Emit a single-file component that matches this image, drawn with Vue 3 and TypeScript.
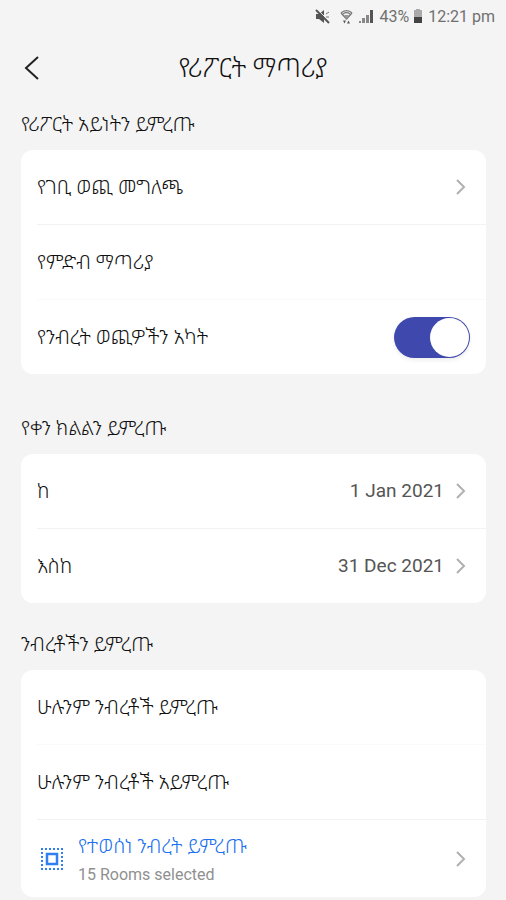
<script setup lang="ts">
import { ref } from 'vue'

const includeExpenses = ref<boolean>(true)
const chevron = 'M2 2 L9 9 L2 16'
</script>

<template>
  <div class="screen">
    <div class="status">
      <svg class="mute" width="15" height="15" viewBox="0 0 15 15" aria-hidden="true">
        <path d="M1 5h3l5-4v13l-5-4H1z" fill="#555" />
        <path d="M11 5l3-2M11 8h3" stroke="#777" />
        <path d="M2 0l13 13" stroke="#f4f4f4" stroke-width="1" />
        <path d="M1 1l13 13" stroke="#555" stroke-width="2" />
      </svg>
      <svg class="wifi" width="13" height="15" viewBox="0 0 13 15" aria-hidden="true">
        <path d="M1 4C4 .7 9 .7 12 4M3 5c2-1.500 5-1.500 7 0M1 4l5.500 6L12 4" fill="none" stroke="#777" stroke-width="1.200" />
        <path d="M4 6h5l-2.500 4z" fill="#999" />
        <path d="M3 11.500h3L4.500 14.500zM7 14.500h3l-1.500-3z" fill="#555" />
      </svg>
      <svg class="signal" width="16" height="15" viewBox="0 0 16 15" aria-hidden="true">
        <path d="M1 14v-2h2v2zM4 14V9h3v5zM8 14V6h3v8z" fill="#888" />
        <path d="M12 14V1h3v13z" fill="#555" />
      </svg>
      <span>43%</span>
      <svg class="battery" width="10" height="15" viewBox="0 0 10 15" aria-hidden="true">
        <path d="M3 0h4v1h2v7H1V1h2z" fill="#aaa" />
        <path d="M1 8h8v6H1z" fill="#444" />
      </svg>
      <span>12:21 pm</span>
    </div>

    <header class="header">
      <button class="back" type="button" aria-label="ተመለስ">
        <svg width="16" height="26" viewBox="0 0 16 26" aria-hidden="true">
          <path d="M14 2L2 13l12 11" fill="none" stroke="#222" stroke-width="2" />
        </svg>
      </button>
      <h1>የሪፖርት ማጣሪያ</h1>
    </header>

    <main>
      <section>
        <h2>የሪፖርት አይነትን ይምረጡ</h2>
        <div class="card">
          <button class="row" type="button">
            <span class="text">የገቢ ወጪ መግለጫ</span>
            <svg class="chevron" width="12" height="18" viewBox="0 0 12 18" aria-hidden="true"><path :d="chevron" /></svg>
          </button>
          <button class="row" type="button">
            <span class="text">የምድብ ማጣሪያ</span>
          </button>
          <label class="row faint">
            <span class="text">የንብረት ወጪዎችን አካት</span>
            <input v-model="includeExpenses" class="switch" type="checkbox" role="switch" />
          </label>
        </div>
      </section>

      <section>
        <h2>የቀን ክልልን ይምረጡ</h2>
        <div class="card">
          <button class="row" type="button">
            <span class="text">ከ</span>
            <span class="value">1 Jan 2021</span>
            <svg class="chevron" width="12" height="18" viewBox="0 0 12 18" aria-hidden="true"><path :d="chevron" /></svg>
          </button>
          <button class="row" type="button">
            <span class="text">እስከ</span>
            <span class="value">31 Dec 2021</span>
            <svg class="chevron" width="12" height="18" viewBox="0 0 12 18" aria-hidden="true"><path :d="chevron" /></svg>
          </button>
        </div>
      </section>

      <section>
        <h2>ንብረቶችን ይምረጡ</h2>
        <div class="card">
          <button class="row" type="button">
            <span class="text">ሁሉንም ንብረቶች ይምረጡ</span>
          </button>
          <button class="row faint" type="button">
            <span class="text">ሁሉንም ንብረቶች አይምረጡ</span>
          </button>
          <button class="row" type="button">
            <svg class="select-icon" width="24" height="24" viewBox="0 0 24 24" aria-hidden="true">
              <path
                d="M1 2h22M1 22h22M2 5v16M22 5v16"
                fill="none"
                stroke="#2f7ff0"
                stroke-width="2"
                stroke-dasharray="2 2"
              />
              <rect x="7" y="7" width="10" height="10" fill="none" stroke="#2f7ff0" stroke-width="2.500" />
            </svg>
            <span class="stack">
              <span class="text accent">የተወሰነ ንብረት ይምረጡ</span>
              <span class="caption">15 Rooms selected</span>
            </span>
            <svg class="chevron" width="12" height="18" viewBox="0 0 12 18" aria-hidden="true"><path :d="chevron" /></svg>
          </button>
        </div>
      </section>
    </main>
  </div>
</template>

<style>
body {
  background: #f4f4f4;
}
</style>

<style scoped>
.screen {
  font-family: Roboto, "Noto Sans", "Noto Sans Ethiopic", sans-serif;
  font-weight: 300;
  color: #111;
}

.status {
  display: flex;
  align-items: center;
  justify-content: flex-end;
  height: 32px;
  padding-right: 11px;
  font-size: 16px;
  font-weight: 400;
  color: #707070;
}

.mute {
  margin-right: 10px;
}

.wifi,
.signal,
.battery {
  margin-right: 5px;
}

.battery {
  margin-left: 4px;
}

.header {
  display: grid;
  grid-template-columns: 64px 1fr 64px;
  align-items: center;
  height: 72px;
}

.back {
  display: flex;
  padding: 8px 24px;
  border: 0;
  background: none;
}

h1 {
  margin: 0;
  font-size: 26px;
  font-weight: 300;
  line-height: 32px;
  text-align: center;
}

main {
  display: flex;
  flex-direction: column;
  gap: 29px;
  padding: 8px 20px 3px 21px;
}

section:first-child {
  padding-bottom: 13px;
}

h2 {
  height: 24px;
  margin: 0 0 14px;
  font-size: 20px;
  font-weight: 300;
  line-height: 24px;
}

.card {
  border-radius: 12px;
  background: #fff;
  overflow: hidden;
}

.row {
  display: flex;
  align-items: center;
  box-sizing: border-box;
  width: calc(100% - 16px);
  min-height: 75px;
  margin-left: 16px;
  padding: 0 16px 0 0;
  border: 0;
  border-top: 1px solid #f2f2f2;
  background: none;
  font: inherit;
  color: inherit;
  text-align: left;
}

.row.faint {
  border-top-color: #fafafa;
}

.row:first-child {
  min-height: 74px;
  border-top: 0;
}

.text {
  flex: 1;
  font-size: 20px;
  line-height: 24px;
}

.value {
  margin-right: 11px;
  font-size: 19px;
  font-weight: 400;
  line-height: 24px;
  color: #555;
}

.chevron {
  margin-right: 3px;
  fill: none;
  stroke: #b0b0b0;
  stroke-width: 2;
}

.switch {
  appearance: none;
  display: flex;
  width: 76px;
  height: 41px;
  margin: 0;
  padding: 1px;
  box-sizing: border-box;
  border-radius: 21px;
  background: #bbb;
  box-shadow: 0 2px 4px #00000014;
}

.switch::before {
  content: "";
  width: 39px;
  height: 39px;
  border-radius: 50%;
  background: #fff;
}

.switch:checked {
  justify-content: flex-end;
  background: #3f48ac;
}

.select-icon {
  margin: 0 14px 0 3px;
}

.stack {
  display: flex;
  flex: 1;
  flex-direction: column;
  gap: 5px;
  padding: 14px 0 10px;
}

.accent {
  color: #2070f0;
}

.caption {
  font-size: 16px;
  font-weight: 400;
  line-height: 24px;
  color: #909090;
}
</style>
